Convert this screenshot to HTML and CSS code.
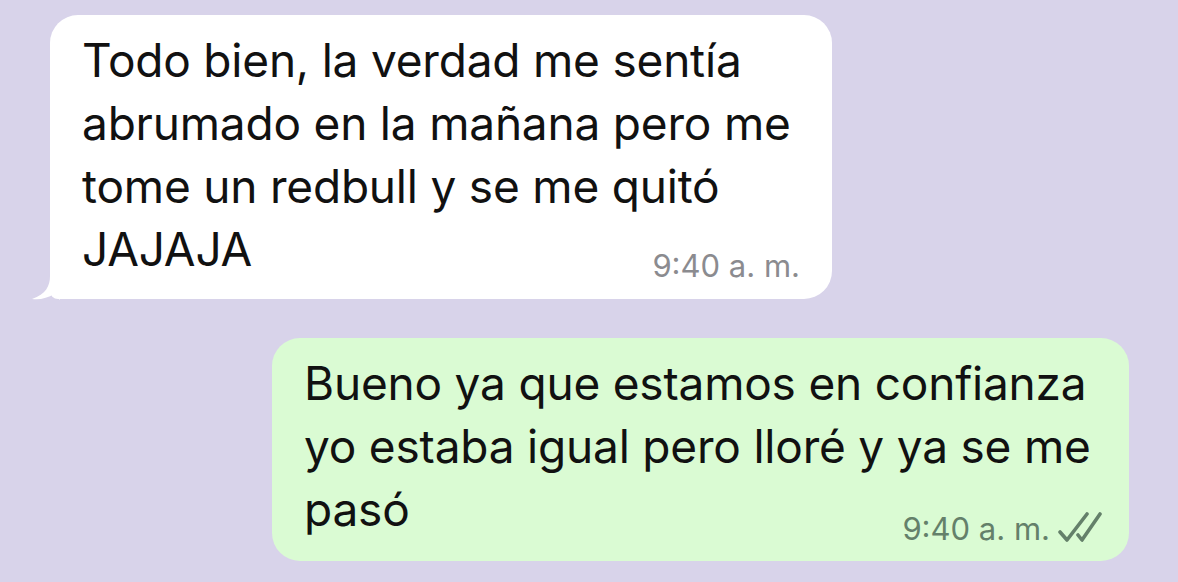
FILE: index.html
```html
<!DOCTYPE html>
<html lang="es">
<head>
  <meta charset="UTF-8">
  <meta name="viewport" content="width=device-width, initial-scale=1.0">
  <title>Chat</title>
  <link rel="stylesheet" href="styles.css">
</head>
<body>
  <div class="chat">
    <div class="row incoming">
      <div class="bubble in">
        <svg class="tail" width="30" height="24" viewBox="0 0 30 24">
          <path d="M20 0 C20 10 16 18 2 23 C10 24 18 22 24 18 C26 20 28 22 30 24 L30 0 Z" fill="#ffffff"/>
        </svg>
        <p class="text">Todo bien, la verdad me sentía<br>abrumado en la mañana pero me<br>tome un redbull y se me quitó<br>JAJAJA</p>
        <div class="meta">9:40 a. m.</div>
      </div>
    </div>
    <div class="row outgoing">
      <div class="bubble out">
        <p class="text">Bueno ya que estamos en confianza<br>yo estaba igual pero lloré y ya se me<br>pasó</p>
        <div class="meta">9:40 a. m.
          <svg class="ticks" width="44" height="30" viewBox="0 0 44 30">
            <path d="M2 20 L9 28 L29 2" fill="none" stroke="#64806a" stroke-width="3.6" stroke-linecap="round" stroke-linejoin="round"/>
            <path d="M20 23 L24 28 L42 2" fill="none" stroke="#64806a" stroke-width="3.6" stroke-linecap="round" stroke-linejoin="round"/>
          </svg>
        </div>
      </div>
    </div>
  </div>
</body>
</html>
```

FILE: styles.css
```css
/* General Styles */
body {
  margin: 0;
  padding: 0;
  background-color: #d8d3ea;
  font-family: 'Inter', 'Liberation Sans', sans-serif;
  color: #111111;
  height: 100vh;
  overflow: hidden;
}

.chat {
  display: flex;
  flex-direction: column;
  gap: 39px;
  padding: 15px 49px 0 50px;
}

.row {
  display: flex;
}

.row.outgoing {
  justify-content: flex-end;
}

.bubble {
  position: relative;
  display: flex;
  flex-direction: column;
  border-radius: 28px;
  box-sizing: border-box;
}

.bubble.in {
  width: 782px;
  background-color: #ffffff;
  padding: 14px 32px 15px 32px;
  border-bottom-left-radius: 8px;
}

.bubble.out {
  width: 857px;
  background-color: #dafbd3;
  padding: 14px 27px 14px 32px;
}

.tail {
  position: absolute;
  left: -20px;
  bottom: -1px;
}

.text {
  margin: 0;
  font-size: 46px;
  line-height: 63px;
  letter-spacing: -0.2px;
}

.meta {
  align-self: flex-end;
  display: flex;
  align-items: center;
  gap: 8px;
  margin-top: -33px;
  font-size: 31px;
  line-height: 36px;
  color: #8b8b8f;
}

.out .meta {
  color: #64806a;
  margin-top: -30px;
}

.ticks {
  margin-top: -4px;
}
```
